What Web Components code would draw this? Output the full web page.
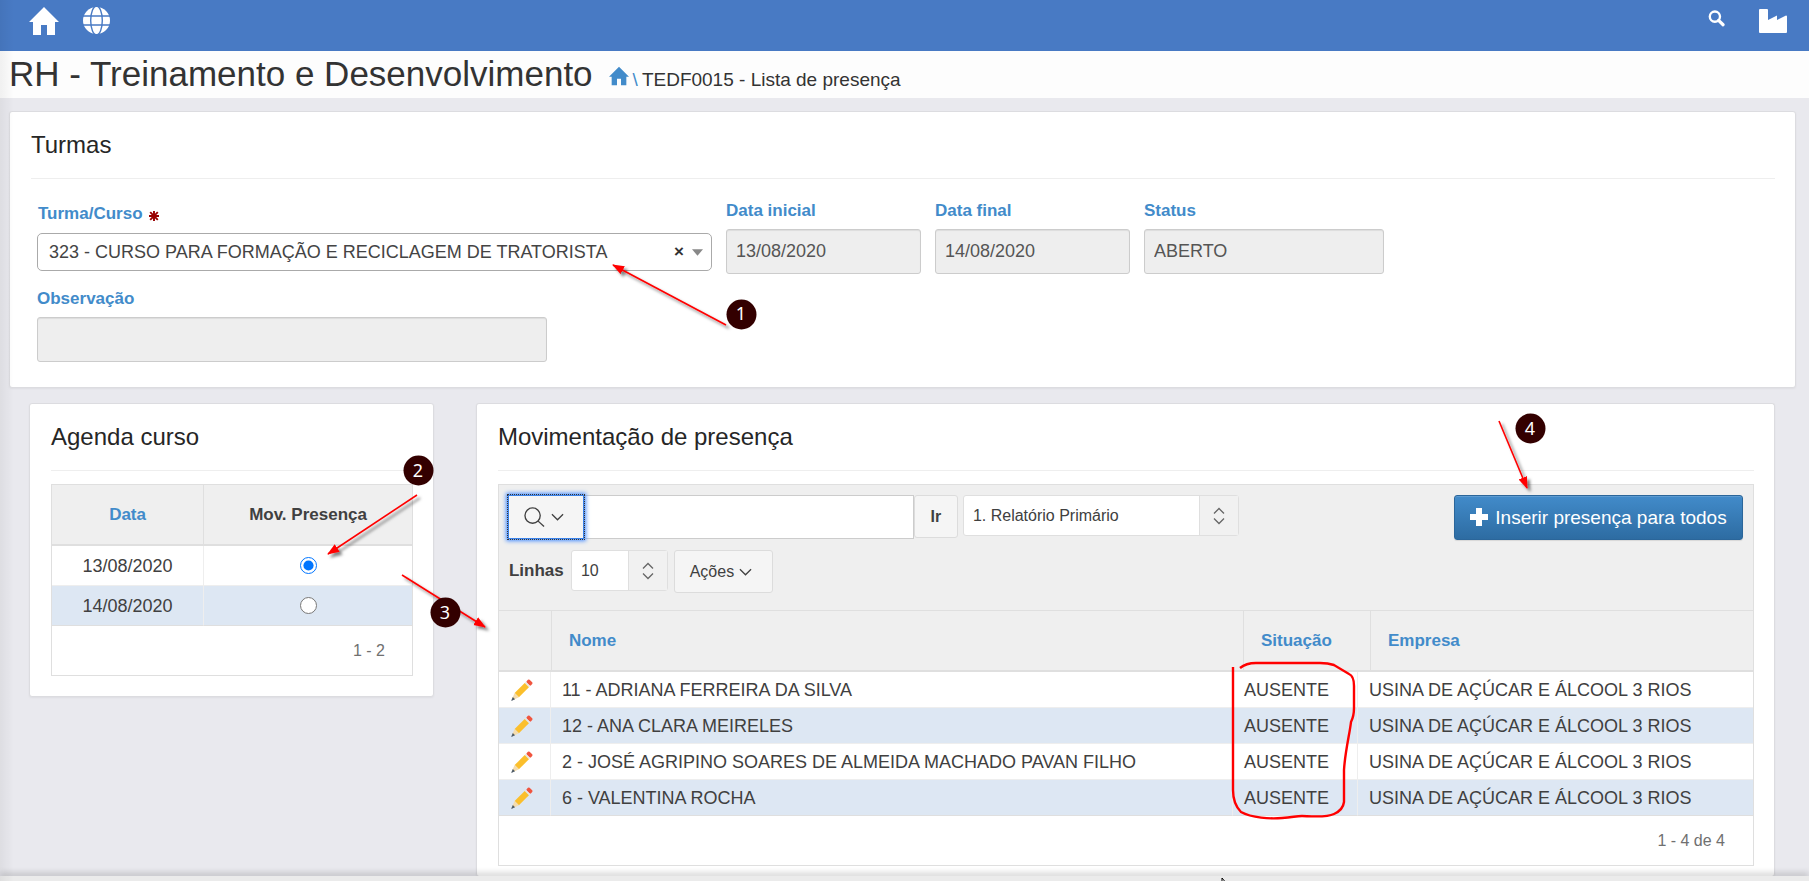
<!DOCTYPE html>
<html lang="pt-BR">
<head>
<meta charset="utf-8">
<title>RH - Treinamento e Desenvolvimento</title>
<style>
  body { margin: 0; background: #e9e9ee; color: #404040; font: 18px/24px "Liberation Sans", Arial, sans-serif; }
</style>
</head>
<body>
<app-shell></app-shell>
<script>
const define = (name, html, setup) => {
  const tpl = document.createElement('template');
  tpl.innerHTML = '<style>*{box-sizing:border-box}:host{display:block;box-sizing:border-box}</style>' + html;
  customElements.define(name, class extends HTMLElement {
    connectedCallback() {
      if (this.shadowRoot) return;
      const root = this.attachShadow({ mode: 'open' });
      root.append(tpl.content.cloneNode(true));
      if (setup) setup(this, root);
    }
  });
};

const ICONS = {
  home: ['0 0 30 28', '<path fill="currentColor" d="M15 0 30 15H26V28H18V18H12V28H4V15H0Z"/>'],
  globe: ['0 0 27 27', '<circle cx="13.5" cy="13.5" r="13.5" fill="currentColor"/><g fill="none" stroke="#487ac4" stroke-width="1.4"><path d="M0 9H27M0 18H27"/><ellipse cx="13.5" cy="13.5" rx="5.8" ry="14.5"/></g>'],
  find: ['0 0 18 18', '<g fill="none" stroke="currentColor"><circle cx="7.3" cy="7" r="5.4" stroke-width="2.5"/><path d="M11.2 11 16 15.6" stroke-width="3.4" stroke-linecap="round"/></g>'],
  factory: ['0 0 28 24', '<path fill="currentColor" d="M0 1Q0 0 1 0H8Q9 0 9 1V11L18 6.5V11L27 6.5Q28 6.5 28 7.5V23Q28 24 27 24H1Q0 24 0 23Z"/>'],
  loupe: ['0 0 22 22', '<g fill="none" stroke="currentColor" stroke-width="1.4"><circle cx="9" cy="9" r="8"/><path d="M14.8 14.8 21 20.5"/></g>'],
  down: ['0 0 14 8', '<path d="M1 1 7 7 13 1" fill="none" stroke="currentColor" stroke-width="1.4"/>'],
  updown: ['0 0 12 18', '<path d="M1 6.5 6 1.5 11 6.5M1 11.5 6 16.5 11 11.5" fill="none" stroke="currentColor" stroke-width="1.3"/>'],
  caret: ['0 0 10 6', '<path d="M0 0H10L5 6Z" fill="currentColor"/>'],
  plus: ['0 0 18 18', '<path d="M6 0H12V6H18V12H12V18H6V12H0V6H6Z" fill="currentColor"/>'],
  star: ['0 0 10 10', '<g stroke="currentColor" stroke-width="1.9"><path d="M5 0V10M0 5H10M1.2 1.2 8.8 8.8M8.8 1.2 1.2 8.8"/></g>'],
  pencil: ['0 0 22 22', '<g transform="rotate(45 11 11)"><rect x="8" y="-3" width="6" height="4" rx="1.2" fill="#f0553f"/><rect x="8" y="1" width="6" height="1.8" fill="#e8e6e2"/><rect x="8" y="2.8" width="6" height="14.2" fill="#fbbf2c"/><path d="M8 17H14L11.8 23H10.2Z" fill="#f4dcae"/><path d="M9.4 21H12.6L11 25Z" fill="#4c5a67"/></g>']
};
define('ui-icon', '<style>:host{display:inline-block;flex:none}svg{display:block;width:100%;height:100%;overflow:visible}</style><svg aria-hidden="true"></svg>', (el, root) => {
  const [box, body] = ICONS[el.getAttribute('name')];
  const svg = root.querySelector('svg');
  svg.setAttribute('viewBox', box);
  svg.innerHTML = body;
});

define('top-bar', `<style>
  :host{display:flex;align-items:flex-start;height:51px;padding:7px 22px 0 29px;background:#487ac4;color:#fff}
  a{color:inherit;display:block}
  nav{display:flex;gap:24px;flex:1}
  .tools{flex:none;gap:34px;padding-top:2px}
  .home{width:30px;height:28px}.globe{width:27px;height:27px}.find{width:17px;height:17px}.fac{width:28px;height:24px}
  </style>
  <nav><a href="#" aria-label="Início"><ui-icon class="home" name="home"></ui-icon></a><a href="#" aria-label="Idioma"><ui-icon class="globe" name="globe"></ui-icon></a></nav>
  <nav class="tools"><a href="#" aria-label="Pesquisar"><ui-icon class="find" name="find"></ui-icon></a><a href="#" aria-label="Empresa"><ui-icon class="fac" name="factory"></ui-icon></a></nav>`);

define('page-title', `<style>
  :host{display:flex;align-items:baseline;height:47px;padding:3px 9px 0;background:#fdfdfd;color:#333}
  h1{margin:0;font-size:35px;line-height:40px;font-weight:400}
  .crumb{display:flex;align-items:baseline;margin-left:16px;font-size:19px;gap:4px}
  a{color:#428bca;display:flex;align-items:baseline;gap:4px;text-decoration:none}
  ui-icon{width:20px;height:20px}
  </style>
  <h1><slot></slot></h1>
  <div class="crumb"><a href="#"><ui-icon name="home"></ui-icon><span>\\</span></a><span><slot name="crumb"></slot></span></div>`);

define('ui-panel', `<style>
  :host{background:#fff;border:1px solid #dcdce0;border-radius:3px;padding:17px 20px 20px 21px;box-shadow:0 1px 2px rgba(0,0,0,.05)}
  h2{margin:0 0 13px;padding-bottom:17px;border-bottom:1px solid #eee;font-size:24px;line-height:32px;font-weight:400;color:#262626}
  </style><h2></h2><slot></slot>`, (el, root) => { root.querySelector('h2').textContent = el.getAttribute('heading'); });

define('ui-field', `<style>
  label{display:block;font-size:17px;font-weight:700;color:#428bca;line-height:24px;margin-bottom:6px;padding:1px 0 0}
  input{display:block;width:100%;height:45px;padding:0 9px;border:1px solid #ccc;border-radius:3px;background:#eee;color:#555;font:inherit;box-shadow:inset 0 1px 1px rgba(0,0,0,.075)}
  </style><label for="f"></label><input id="f" readonly>`, (el, root) => {
  root.querySelector('label').textContent = el.getAttribute('label');
  root.querySelector('input').value = el.getAttribute('value') || '';
});

define('course-select', `<style>
  label{display:flex;align-items:center;gap:6px;font-size:17px;font-weight:700;color:#428bca;line-height:24px;margin-bottom:7px;padding-left:1px}
  label ui-icon{width:10px;height:10px;color:#900;margin-top:4px}
  .box{position:relative}
  select{appearance:none;display:block;width:100%;height:38px;padding:0 48px 0 11px;border:1px solid #aaa;border-radius:5px;background:#fff;color:#444;font:inherit}
  .marks{position:absolute;inset:0 9px 0 auto;display:flex;align-items:center;gap:8px;pointer-events:none;color:#888}
  button{border:0;padding:0;background:none;color:#333;font:700 17px/20px "Liberation Sans",Arial,sans-serif}
  .marks ui-icon{width:11px;height:7px}
  </style><label for="c">Turma/Curso <ui-icon name="star"></ui-icon></label>
  <div class="box"><select id="c"><option>323 - CURSO PARA FORMAÇÃO E RECICLAGEM DE TRATORISTA</option></select>
  <div class="marks"><button aria-label="Limpar">×</button><ui-icon name="caret"></ui-icon></div></div>`);

define('split-select', `<style>
  :host{position:relative;height:41px}
  select{appearance:none;display:block;width:100%;height:100%;padding:0 48px 0 9px;border:1px solid #dfdfdf;border-radius:3px;background:#fff;color:#404040;font:inherit;font-size:16px}
  .end{position:absolute;inset:1px 1px 1px auto;width:39px;border-left:1px solid #dfdfdf;background:#f1f1f1;display:grid;place-items:center;pointer-events:none;color:#666}
  ui-icon{width:12px;height:18px}
  </style><select><option></option></select><span class="end"><ui-icon name="updown"></ui-icon></span>`, (el, root) => {
  root.querySelector('option').textContent = el.getAttribute('value');
  root.querySelector('select').setAttribute('aria-label', el.getAttribute('label'));
});

define('agenda-table', `<style>
  :host{border:1px solid #dfdfdf}
  table{width:100%;table-layout:fixed;border-collapse:separate;border-spacing:0;text-align:center}
  .first{width:42%}
  th{height:61px;padding:0;background:#efefef;border-bottom:2px solid #dfdfdf;font-size:17px;font-weight:700}
  th+th{border-left:1px solid #dfdfdf}
  a{color:#428bca;text-decoration:none}
  td{height:40px;padding:0;border-bottom:1px solid #eee}
  td+td{border-left:1px solid #eee}
  tbody tr:nth-child(2) td{background:#dde7f3}
  tbody tr:last-child td{border-bottom-color:#dfdfdf}
  input{display:block;width:17px;height:17px;margin:0 auto}
  p{margin:0;height:49px;line-height:50px;padding-right:27px;text-align:right;font-size:16px;color:#707070}
  </style>
  <table><colgroup><col class="first"><col></colgroup>
  <thead><tr><th><a href="#">Data</a></th><th>Mov. Presença</th></tr></thead>
  <tbody><tr><td>13/08/2020</td><td><input type="radio" name="d" aria-label="13/08/2020" checked></td></tr>
  <tr><td>14/08/2020</td><td><input type="radio" name="d" aria-label="14/08/2020"></td></tr></tbody></table>
  <p>1 - 2</p>`);

define('report-toolbar', `<style>
  :host{display:flex;flex-direction:column;gap:10px;height:125px;padding:10px 10px 0 9px;background:#efefef}
  .row{display:flex;align-items:flex-start}
  button{height:43px;border:1px solid #dcdcdc;border-radius:3px;background:#f5f5f5;color:#404040;font:inherit;font-size:16px;padding:0;display:flex;align-items:center;justify-content:center}
  .find{width:76px;height:44px;gap:6px;padding-right:4px;border:1px solid #3b82e8;outline:1px dotted #333;box-shadow:0 0 4px 2px #4c90fe;border-radius:0;z-index:1}
  .find ui-icon:first-child{width:21px;height:21px}
  .down{width:13px;height:8px}
  .q{width:330px;height:44px;border:1px solid #ccc;background:#fff;font:inherit;padding:0 8px}
  .go{width:44px;margin-right:5px;font-weight:700}
  .rep{width:276px}.lines{width:97px;margin-right:6px}
  .act{width:99px;gap:5px;padding-right:5px}
  .all{width:289px;height:45px;margin-left:auto;gap:7px;border-color:#2b669a;background:linear-gradient(#428bca,#2d6ca2);box-shadow:inset 0 1px 0 rgba(255,255,255,.15),0 1px 1px rgba(0,0,0,.1);color:#fff;font-size:19px}
  .all ui-icon{width:18px;height:18px;margin-top:-2px}
  b{line-height:42px;width:63px;padding-left:1px;font-size:17px}
  </style>
  <div class="row"><button class="find" aria-label="Selecionar colunas"><ui-icon name="loupe"></ui-icon><ui-icon class="down" name="down"></ui-icon></button><input class="q" aria-label="Pesquisar"><button class="go">Ir</button>
  <split-select class="rep" label="Relatórios" value="1. Relatório Primário"></split-select>
  <button class="all"><ui-icon name="plus"></ui-icon>Inserir presença para todos</button></div>
  <div class="row"><b>Linhas</b><split-select class="lines" label="Linhas" value="10"></split-select><button class="act">Ações <ui-icon class="down" name="down"></ui-icon></button></div>`);

define('attendance-report', `<style>
  :host{border:1px solid #dfdfdf}
  table{width:100%;table-layout:fixed;border-collapse:separate;border-spacing:0;text-align:left}
  th{height:62px;padding:0 17px;background:#efefef;border-top:1px solid #dfdfdf;border-bottom:2px solid #dfdfdf;font-size:17px;font-weight:700;color:#428bca}
  th+th{border-left:1px solid #dfdfdf}
  th a{color:inherit;text-decoration:none}
  .he{width:52px}.hs{width:127px}.hc{width:383px}
  .be{width:51px}.bs{width:125px}.bc{width:396px}
  td{height:36px;padding:0 11px;border-bottom:1px solid #eee;white-space:nowrap}
  td+td{border-left:1px solid #eee}
  tr:nth-child(even) td{background:#dde7f3}
  tbody tr:last-child td{border-bottom-color:#dfdfdf}
  td a{display:block;height:22px;margin-top:2px}
  td ui-icon{display:block;width:22px;height:22px}
  p{margin:0;height:49px;line-height:50px;padding-right:28px;text-align:right;font-size:16px;color:#707070}
  </style>
  <report-toolbar></report-toolbar>
  <table><colgroup><col class="he"><col><col class="hs"><col class="hc"></colgroup>
  <thead><tr><th></th><th><a href="#">Nome</a></th><th><a href="#">Situação</a></th><th><a href="#">Empresa</a></th></tr></thead></table>
  <table><colgroup><col class="be"><col><col class="bs"><col class="bc"></colgroup><tbody></tbody></table>
  <p>1 - 4 de 4</p>`, (el, root) => {
  root.querySelector('tbody').innerHTML = ['11 - ADRIANA FERREIRA DA SILVA', '12 - ANA CLARA MEIRELES', '2 - JOSÉ AGRIPINO SOARES DE ALMEIDA MACHADO PAVAN FILHO', '6 - VALENTINA ROCHA']
    .map(n => `<tr><td><a href="#" aria-label="Editar"><ui-icon name="pencil"></ui-icon></a></td><td>${n}</td><td>AUSENTE</td><td>USINA DE AÇÚCAR E ÁLCOOL 3 RIOS</td></tr>`).join('');
});

define('step-marks', `<style>
  :host{position:absolute;inset:0;pointer-events:none;overflow:hidden}
  svg{position:absolute;left:0;top:0;overflow:visible}
  text{font:18px "Noto Sans","Open Sans",sans-serif;fill:#fff;text-anchor:middle}
  </style>
  <svg width="1" height="1">
    <defs><filter id="s" x="-20%" y="-20%" width="150%" height="150%"><feDropShadow dx="3" dy="3" stdDeviation="1.5" flood-opacity=".5"/></filter>
    <marker id="a" markerUnits="userSpaceOnUse" markerWidth="12" markerHeight="10" refX="11" refY="5" orient="auto"><path d="M0 .5 12 5 0 9.5Z" fill="red"/></marker></defs>
    <g stroke="red" stroke-width="1.6" filter="url(#s)">
      <path d="M726 325 613 265" marker-end="url(#a)"/><path d="M417 495 328 554" marker-end="url(#a)"/><path d="M402 575 485 627" marker-end="url(#a)"/><path d="M1499 421 1527 488" marker-end="url(#a)"/>
    </g>
    <path d="M1233 667 1233 790Q1233 804 1241 812C1252 818 1270 819 1282 818S1296 816 1302 816S1326 818 1334 814Q1343 810 1344 802V770C1345 752 1350 732 1351 722Q1354 716 1354 708V686Q1354 676 1349 674L1334 665Q1328 663 1320 663H1256Q1246 663 1240 668" fill="none" stroke="red" stroke-width="2.4"/>
    <g fill="#300"><circle cx="741.5" cy="314.5" r="15"/><circle cx="418.5" cy="470.5" r="15"/><circle cx="445.5" cy="612.5" r="15"/><circle cx="1530.5" cy="428.5" r="15"/></g>
    <text x="741" y="320">1</text><text x="418" y="477">2</text><text x="445" y="619">3</text><text x="1530" y="435">4</text>
    <path d="M1222 878 1222 884 1227 884Z" fill="#fff" stroke="#000"/>
  </svg>`);

define('app-shell', `<style>
  :host{position:relative;min-height:100vh;display:flex;flex-direction:column;overflow:hidden}
  main{flex:1;display:flex;flex-direction:column;padding:13px 13px 0 9px}
  .course{padding-bottom:25px}
  .fields{display:flex;gap:14px;align-items:flex-end;padding:6px 6px 0}
  .c{width:675px;margin-bottom:3px}.d{width:195px}.s{width:240px}.o{width:510px}
  .obs{padding-top:12px}
  .cols{flex:1;display:grid;grid-template-columns:minmax(0,24fr) minmax(0,77fr);gap:42px;padding:15px 21px 0 20px;align-items:start}
  .rep{align-self:stretch;padding-bottom:10px;border-bottom:0}
  footer{height:6px;background:#ebebeb;box-shadow:0 -3px 6px rgba(0,0,0,.18);position:relative}
  .edge{position:absolute;inset:0 auto 0 0;width:14px;background:linear-gradient(90deg,rgba(0,0,0,.05),transparent);pointer-events:none}
  </style>
  <top-bar></top-bar>
  <page-title>RH - Treinamento e Desenvolvimento<span slot="crumb">TEDF0015 - Lista de presença</span></page-title>
  <main>
    <ui-panel class="course" heading="Turmas">
      <div class="fields"><course-select class="c"></course-select><ui-field class="d" label="Data inicial" value="13/08/2020"></ui-field><ui-field class="d" label="Data final" value="14/08/2020"></ui-field><ui-field class="s" label="Status" value="ABERTO"></ui-field></div>
      <div class="fields obs"><ui-field class="o" label="Observação"></ui-field></div>
    </ui-panel>
    <div class="cols"><ui-panel heading="Agenda curso"><agenda-table></agenda-table></ui-panel>
    <ui-panel class="rep" heading="Movimentação de presença"><attendance-report></attendance-report></ui-panel></div>
  </main>
  <footer></footer>
  <div class="edge"></div>
  <step-marks></step-marks>`);
</script>
</body>
</html>
